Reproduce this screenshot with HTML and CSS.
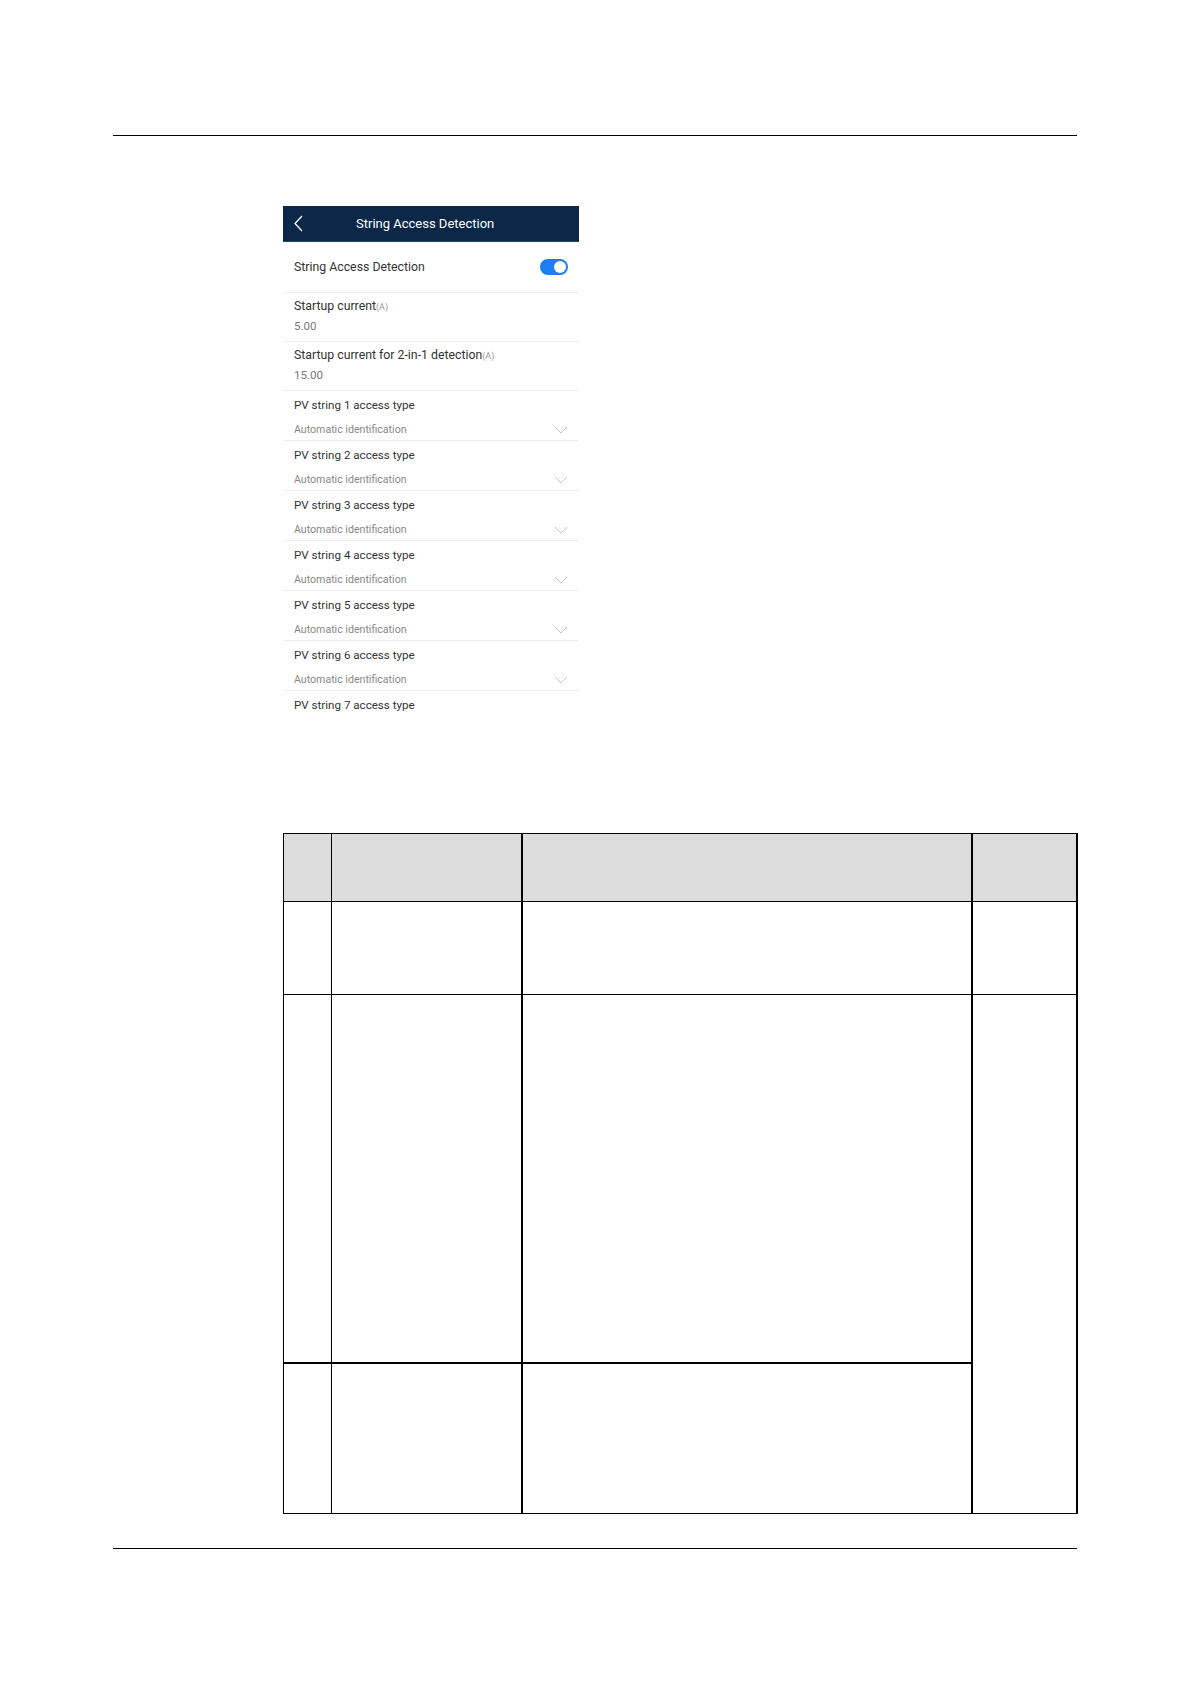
FILE: index.html
```html
<!DOCTYPE html>
<html lang="en">
<head>
    <meta charset="UTF-8">
    <meta name="viewport" content="width=device-width, initial-scale=1.0">
    <title>String Access Detection</title>
    <link rel="stylesheet" href="styles.css">
</head>
<body>
    <div class="page">
        <div class="page-head"></div>

        <!-- app screen -->
        <div class="phone">
            <div class="phone-bar">
                <svg class="back" width="9" height="17" viewBox="0 0 9 17">
                    <polyline points="8,1 1,8.5 8,16" fill="none" stroke="#fff" stroke-width="1.3"/>
                </svg>
                <span class="phone-title">String Access Detection</span>
            </div>

            <div class="item item-switch">
                <span class="label">String Access Detection</span>
                <span class="switch"><span class="knob"></span></span>
            </div>

            <div class="item item-value">
                <div class="label">Startup current<span class="unit">(A)</span></div>
                <div class="value">5.00</div>
            </div>
            <div class="item item-value">
                <div class="label">Startup current for 2-in-1 detection<span class="unit">(A)</span></div>
                <div class="value">15.00</div>
            </div>

            <div class="item item-select">
                <div class="label">PV string 1 access type</div>
                <div class="select">Automatic identification
                    <svg width="14" height="8" viewBox="0 0 14 8"><polyline points="1,1 7,7 13,1" fill="none" stroke="#c4c4c4" stroke-width="1"/></svg>
                </div>
            </div>
            <div class="item item-select">
                <div class="label">PV string 2 access type</div>
                <div class="select">Automatic identification
                    <svg width="14" height="8" viewBox="0 0 14 8"><polyline points="1,1 7,7 13,1" fill="none" stroke="#c4c4c4" stroke-width="1"/></svg>
                </div>
            </div>
            <div class="item item-select">
                <div class="label">PV string 3 access type</div>
                <div class="select">Automatic identification
                    <svg width="14" height="8" viewBox="0 0 14 8"><polyline points="1,1 7,7 13,1" fill="none" stroke="#c4c4c4" stroke-width="1"/></svg>
                </div>
            </div>
            <div class="item item-select">
                <div class="label">PV string 4 access type</div>
                <div class="select">Automatic identification
                    <svg width="14" height="8" viewBox="0 0 14 8"><polyline points="1,1 7,7 13,1" fill="none" stroke="#c4c4c4" stroke-width="1"/></svg>
                </div>
            </div>
            <div class="item item-select">
                <div class="label">PV string 5 access type</div>
                <div class="select">Automatic identification
                    <svg width="14" height="8" viewBox="0 0 14 8"><polyline points="1,1 7,7 13,1" fill="none" stroke="#c4c4c4" stroke-width="1"/></svg>
                </div>
            </div>
            <div class="item item-select">
                <div class="label">PV string 6 access type</div>
                <div class="select">Automatic identification
                    <svg width="14" height="8" viewBox="0 0 14 8"><polyline points="1,1 7,7 13,1" fill="none" stroke="#c4c4c4" stroke-width="1"/></svg>
                </div>
            </div>
            <div class="item item-select">
                <div class="label">PV string 7 access type</div>
            </div>
        </div>

        <!-- parameter table -->
        <table class="params">
            <colgroup>
                <col class="c-no">
                <col class="c-name">
                <col class="c-desc">
                <col class="c-note">
            </colgroup>
            <tr class="row-head">
                <th></th>
                <th></th>
                <th class="thick-left"></th>
                <th class="thick-left thick-right"></th>
            </tr>
            <tr class="row-1">
                <td></td>
                <td></td>
                <td class="thick-left"></td>
                <td class="thick-left thick-right"></td>
            </tr>
            <tr class="row-2">
                <td class="thick-bottom"></td>
                <td class="thick-bottom"></td>
                <td class="thick-left thick-bottom"></td>
                <td class="thick-left thick-right" rowspan="2"></td>
            </tr>
            <tr class="row-3">
                <td></td>
                <td></td>
                <td class="thick-left"></td>
            </tr>
        </table>

        <div class="page-foot"></div>
    </div>
</body>
</html>
```

FILE: styles.css
```css
/* page */
body {
    margin: 0;
    background: #fff;
    font-family: Roboto, "Liberation Sans", sans-serif;
}
.page {
    width: 964px;
    margin-left: 113px;
}
.page-head {
    height: 135px;
    border-bottom: 1px solid #000;
}
.page-foot {
    margin-top: 34px;
    border-top: 1px solid #000;
}

/* app screen */
.phone {
    width: 296px;
    height: 508px;
    margin: 70px 0 0 170px;
    overflow: hidden;
}
.phone-bar {
    height: 35px;
    display: flex;
    align-items: center;
    padding: 0 11px;
    background: #0c2848;
    border-bottom: 1px solid #2c4765;
}
.phone-title {
    margin-left: 53px;
    font-size: 13px;
    color: #fff;
}
.item {
    box-sizing: border-box;
    padding: 0 11px;
    border-bottom: 1px solid #ededed;
}
.label {
    font-size: 12.3px;
    line-height: 16px;
    color: #333;
}
.unit {
    font-size: 9px;
    color: #9a9a9a;
}
.item-switch {
    height: 51px;
    display: flex;
    align-items: center;
    justify-content: space-between;
}
.switch {
    width: 28px;
    height: 16px;
    border-radius: 8px;
    background: #1a7ff2;
    display: flex;
    align-items: center;
    justify-content: flex-end;
    padding-right: 2px;
    box-sizing: border-box;
}
.knob {
    width: 12px;
    height: 12px;
    border-radius: 50%;
    background: #fff;
}
.item-value {
    height: 49px;
    padding-top: 5px;
}
.value {
    margin-top: 3px;
    font-size: 11.5px;
    line-height: 16px;
    color: #777;
}
.item-select {
    height: 50px;
    padding-top: 6px;
}
.item-select .label {
    font-size: 11.6px;
}
.select {
    margin-top: 9px;
    display: flex;
    align-items: center;
    justify-content: space-between;
    font-size: 10.6px;
    line-height: 16px;
    color: #888;
}

/* table */
.params {
    margin: 119px 0 0 170px;
    width: 794px;
    border-collapse: collapse;
    table-layout: fixed;
}
.c-no { width: 48px; }
.c-name { width: 190px; }
.c-desc { width: 450px; }
.c-note { width: 105px; }
.params th,
.params td {
    border: 1px solid #000;
    padding: 0;
}
.params th {
    background: #dcdcdc;
}
.params .thick-left { border-left-width: 2px; }
.params .thick-right { border-right-width: 2px; }
.params .thick-bottom { border-bottom-width: 2px; }
.row-head { height: 68px; }
.row-1 { height: 93px; }
.row-2 { height: 368px; }
.row-3 { height: 151px; }
```
